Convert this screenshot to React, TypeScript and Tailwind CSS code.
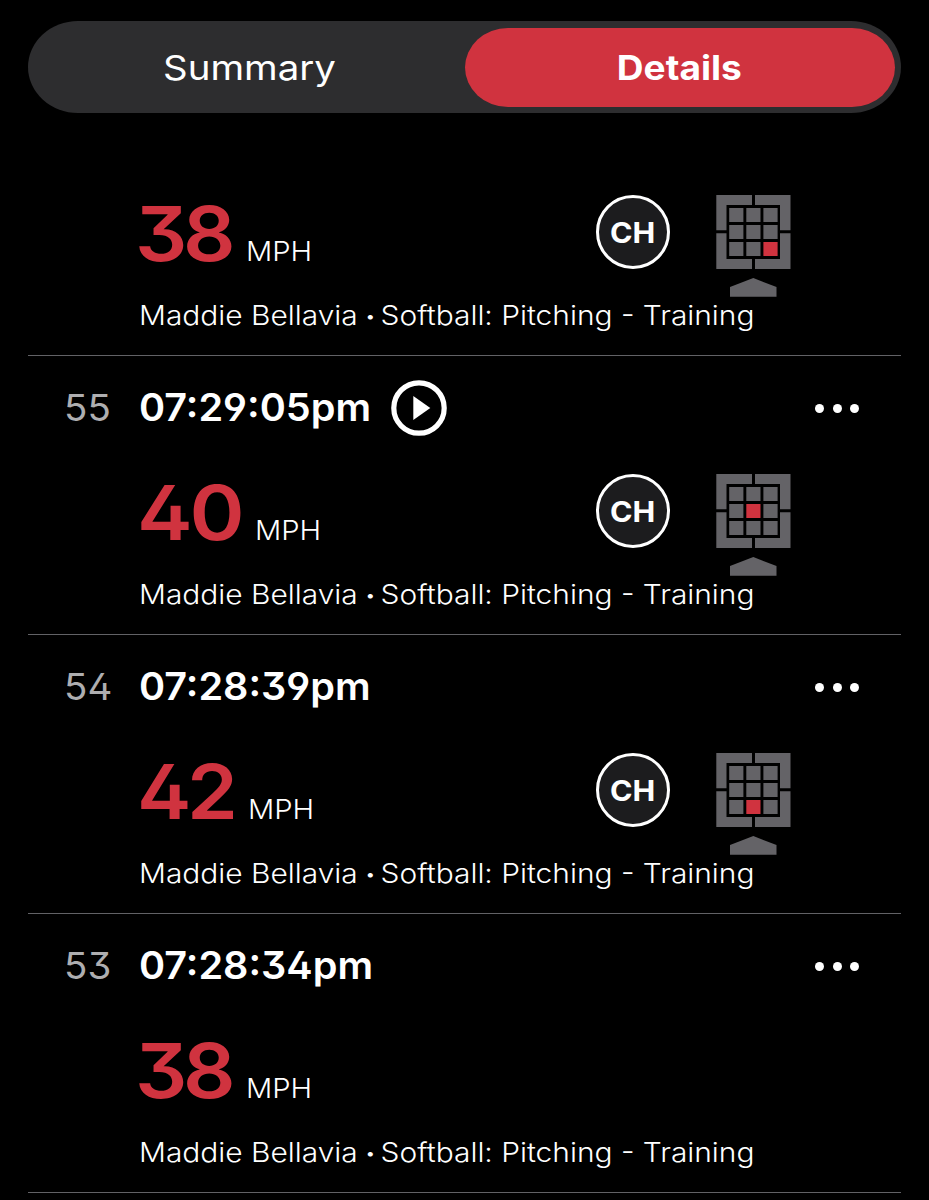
type Pitch = {
  id?: number;
  time?: string;
  video?: boolean;
  speed: number;
  zone?: number;
};

const pitches: Pitch[] = [
  { speed: 38, zone: 8 },
  { id: 55, time: "07:29:05pm", video: true, speed: 40, zone: 4 },
  { id: 54, time: "07:28:39pm", speed: 42, zone: 7 },
  { id: 53, time: "07:28:34pm", speed: 38 },
];

const speedBox: Record<number, string> = {
  38: "-ml-[4px] w-[111px]",
  40: "-ml-[2px] w-[118px]",
  42: "-ml-[2px] w-[111px]",
};

const speedStretch: Record<number, string> = {
  38: "scale-x-[1.08] tracking-[-4px]",
  40: "scale-x-[1.1] tracking-[-3px]",
  42: "scale-x-[1.075] tracking-[-4px]",
};

function StrikeZone({ active }: { active: number }) {
  const xs = [13.2, 30.3, 47.4];
  const ys = [13, 30, 47];
  return (
    <svg width="75" height="102" viewBox="0 0 75 102" className="ml-[46px] shrink-0">
      <g fill="#646367">
        <path d="M.3 0H36V10H10.5V35.3H.3Z" />
        <path d="M39 0H74.5V35.3H64V10H39Z" />
        <path d="M.3 38.3H10.5V64H36V74H.3Z" />
        <path d="M74.5 38.3V74H39V64H64V38.3Z" />
        <path d="M14 92L37.3 83L60.5 92V101.7H14Z" />
      </g>
      {Array.from({ length: 9 }, (_, i) => (
        <rect
          key={i}
          x={xs[i % 3]}
          y={ys[Math.floor(i / 3)]}
          width="14.2"
          height="14"
          fill={i === active ? "#d0333f" : "#646367"}
        />
      ))}
    </svg>
  );
}

function PlayIcon() {
  return (
    <svg width="56" height="56" viewBox="0 0 56 56" className="shrink-0">
      <circle cx="28" cy="28" r="25.2" fill="none" stroke="#fff" strokeWidth="5.2" />
      <path d="M22.3 16V40L39.3 28Z" fill="#fff" />
    </svg>
  );
}

function PitchRow({ pitch }: { pitch: Pitch }) {
  return (
    <li className="border-b border-[#626266]">
      {pitch.time && (
        <div className="flex h-[104px] items-center pr-[42px] pl-[36px]">
          <span className="w-[75px] text-[37px] text-[#aeaeb0]">
            <span className="inline-block origin-left scale-x-[1.04]">{pitch.id}</span>
          </span>
          <span className="w-[252px] pb-px text-[38px] font-semibold whitespace-nowrap">
            <span className="inline-block origin-left scale-x-[1.042]">{pitch.time}</span>
          </span>
          {pitch.video && <PlayIcon />}
          <span className="ml-auto flex gap-[8.5px]">
            <i className="size-[9px] rounded-full bg-white" />
            <i className="size-[9px] rounded-full bg-white" />
            <i className="size-[9px] rounded-full bg-white" />
          </span>
        </div>
      )}
      <div className={`${pitch.time ? "mt-[14px]" : ""} flex h-[102px] items-start pl-[111px]`}>
        <div className="flex h-[74px] w-[457px] items-baseline leading-[77px]">
          <span className={`${speedBox[pitch.speed]} text-[76px] font-semibold text-[#d0333f]`}>
            <span className={`${speedStretch[pitch.speed]} inline-block origin-left`}>{pitch.speed}</span>
          </span>
          <span className="origin-left scale-x-[1.08] text-[27px] font-light">MPH</span>
        </div>
        {pitch.zone !== undefined && (
          <>
            <div className="flex size-[74px] items-center justify-center rounded-full border-[3px] border-white bg-[#1c1c1e] pt-px text-[29px] font-bold">
              <span className="scale-x-[1.05]">CH</span>
            </div>
            <StrikeZone active={pitch.zone} />
          </>
        )}
      </div>
      <p className="mb-[21px] pl-[111px] text-[27px] leading-[37px] font-light whitespace-nowrap">
        <span className="inline-block origin-left scale-x-[1.107]">
          Maddie Bellavia{" "}
          <span className="-mx-px inline-block w-[7.5px] -translate-y-[3px] text-center text-[17px] leading-none">•</span>{" "}
          Softball: Pitching - Training
        </span>
      </p>
    </li>
  );
}

export default function App() {
  return (
    <main className="h-[1200px] overflow-hidden bg-black px-[28px] pt-[21px] font-['Inter',sans-serif] text-white [font-feature-settings:'cv09','ss01']">
      <div className="flex h-[92px] rounded-[50px/46px] bg-[#2d2d2f] p-[6.5px]">
        <button className="flex-1 pt-px text-[34px]">
          <span className="inline-block scale-x-[1.13]">Summary</span>
        </button>
        <button className="flex-1 rounded-[43px/39.5px] bg-[#d0333f] pt-px text-[34px] font-bold">
          <span className="inline-block scale-x-[1.09]">Details</span>
        </button>
      </div>
      <ul className="mt-[82px]">
        {pitches.map((pitch, i) => (
          <PitchRow key={i} pitch={pitch} />
        ))}
      </ul>
    </main>
  );
}
